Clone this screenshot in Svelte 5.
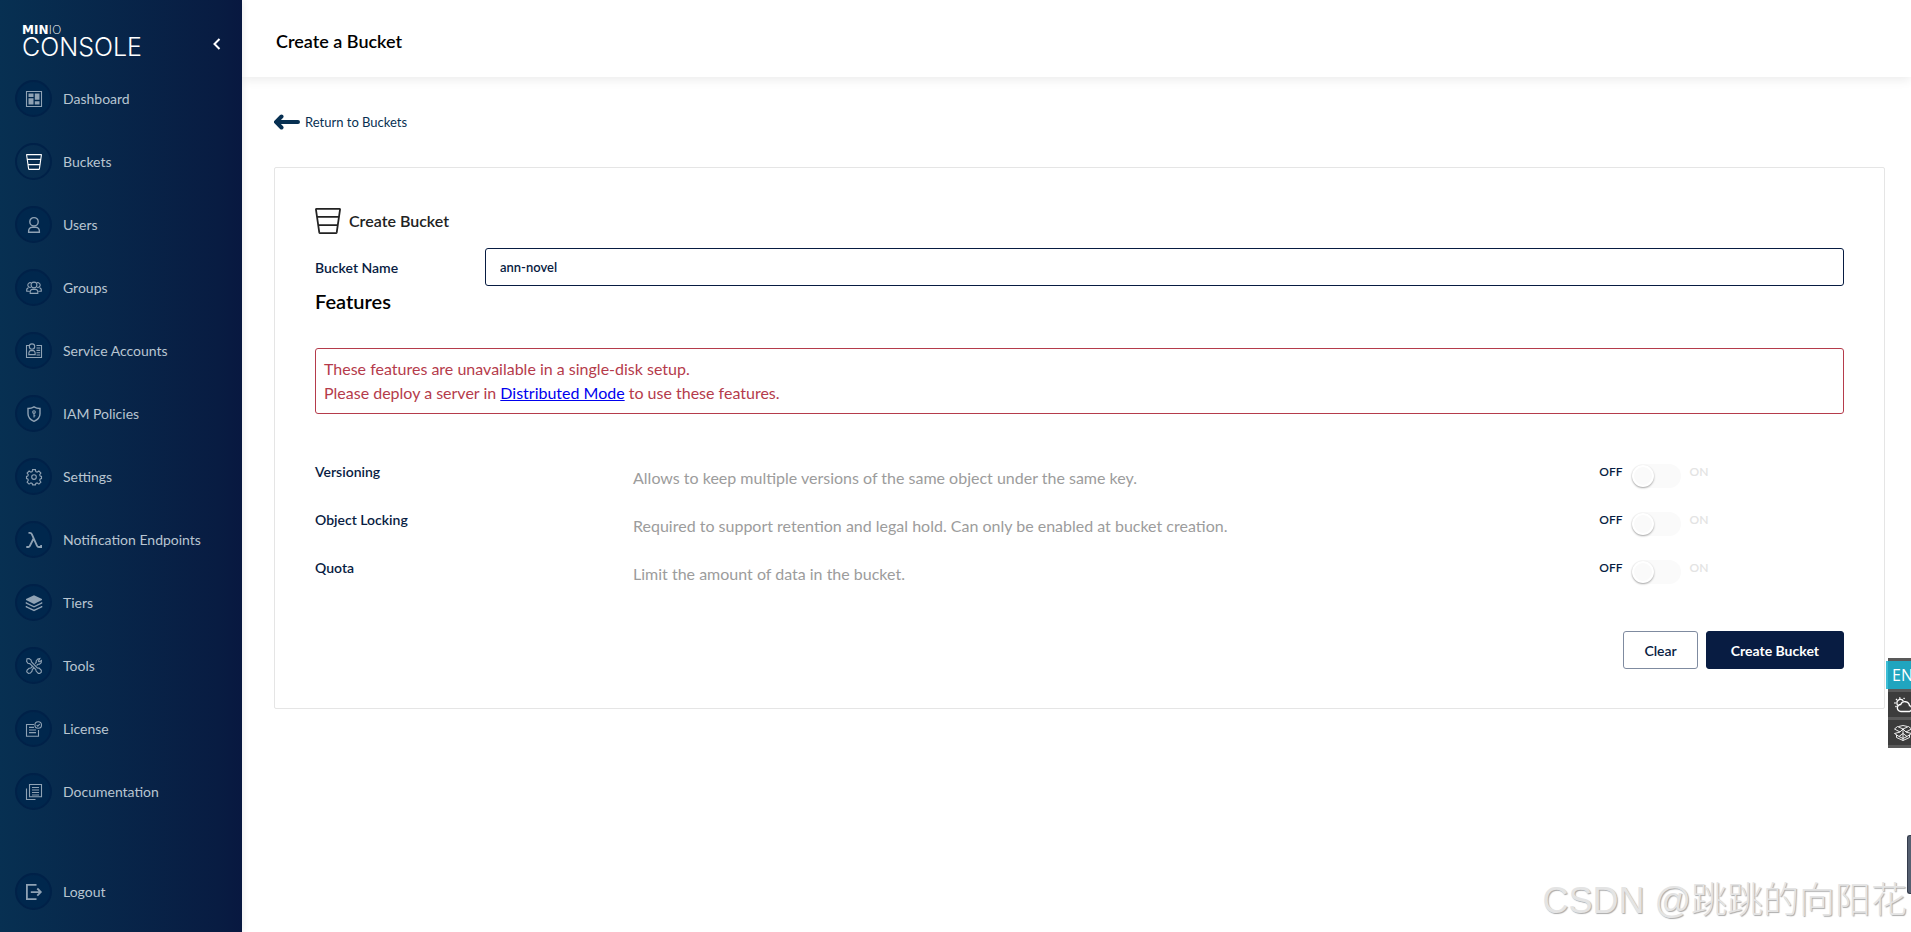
<script lang="ts">
    interface Feature {
        id: string;
        label: string;
        description: string;
    }

    const menu = [
        { name: "Dashboard", icon: "dashboard" },
        { name: "Buckets", icon: "buckets" },
        { name: "Users", icon: "users" },
        { name: "Groups", icon: "groups" },
        { name: "Service Accounts", icon: "account" },
        { name: "IAM Policies", icon: "policy" },
        { name: "Settings", icon: "settings" },
        { name: "Notification Endpoints", icon: "lambda" },
        { name: "Tiers", icon: "tiers" },
        { name: "Tools", icon: "tools" },
        { name: "License", icon: "license" },
        { name: "Documentation", icon: "documentation" },
    ];

    const features: Feature[] = [
        {
            id: "versioning",
            label: "Versioning",
            description:
                "Allows to keep multiple versions of the same object under the same key.",
        },
        {
            id: "locking",
            label: "Object Locking",
            description:
                "Required to support retention and legal hold. Can only be enabled at bucket creation.",
        },
        {
            id: "quota",
            label: "Quota",
            description: "Limit the amount of data in the bucket.",
        },
    ];

    let active = $state("Buckets");
    let bucket_name = $state("ann-novel");
</script>

{#snippet icon(name: string)}
    <svg class="icon" viewBox="0 0 16 16" aria-hidden="true">
        {#if name === "dashboard"}
            <path class="line" d="M.5.5h15v15H.5z" />
            <path
                class="fill"
                d="M2.5 2.5h5v3.4h-5zM2.5 7.2h5v6.3h-5zM8.8 2.5h4.7v6.3H8.8zM8.8 10.2h4.7v3.3H8.8z"
            />
        {:else if name === "buckets"}
            <path
                class="line"
                d="M.9.6h14.2q.4 0 .3.4l-2 13.9q-.1.5-.6.5H3.2q-.5 0-.6-.5L.6 1Q.5.6.9.6zM1.2 5.4h13.6M2 10.6h12"
            />
        {:else if name === "users"}
            <circle class="line bold" cx="8" cy="4.8" r="4.2" />
            <path
                class="line bold"
                d="M2.6 15.3q-.3-5 3.6-5h3.6q3.9 0 3.6 5z"
            />
        {:else if name === "groups"}
            <circle class="line" cx="8" cy="5" r="2.9" />
            <path
                class="line"
                d="M4.2 13.4q-.4-4 2.4-4h2.8q2.8 0 2.4 4zM4.8 7.4A2.4 2.4 0 1 1 5 2.8M11.2 7.4A2.4 2.4 0 1 0 11 2.8M3.6 11.3H.7Q.3 8.2 2.4 7.9M12.4 11.3h2.9q.4-3.1-1.7-3.4"
            />
        {:else if name === "account"}
            <path
                class="line"
                d="M3 2.5H.5v12h15v-12h-5M10.5 5h3.6M10.5 7.4h3.6M10.5 9.8h3.6M10.5 12h3.6"
            />
            <circle class="line" cx="6" cy="3.6" r="2.7" />
            <path class="line" d="M2.8 11.6q0-4 2-4h2.4q2 0 2 4z" />
        {:else if name === "policy"}
            <path
                class="line bold"
                d="M8 .8q2.6 1.7 6 1.7v5.3q0 5-6 7.5-6-2.5-6-7.5V2.5q3.4 0 6-1.7z"
            />
            <circle class="line" cx="8" cy="6" r="1.3" />
            <path class="line" d="M8 7v4.6M8 9.7h1.4" />
        {:else if name === "settings"}
            <path
                class="line"
                d="M6.6.6h2.8l.4 2 1.3.6 1.8-1.2 2 2-1.2 1.8.5 1.3 1.3.3v2.2l-1.3.4-.5 1.3 1.2 1.8-2 2-1.8-1.2-1.3.6-.4 1.4H6.600l-.4-1.400-1.300-.6-1.800 1.200-2-2 1.200-1.800-.5-1.300-1.300-.4V7.400l1.300-.3.5-1.300L1.100 4l2-2 1.800 1.200 1.300-.6z"
            />
            <circle class="line" cx="8" cy="8.1" r="2.3" />
        {:else if name === "lambda"}
            <path
                class="line heavy"
                d="M2.5.9h1.4q1.4 0 2 1.4l5 11.3q.6 1.4 2 1.4h2.2v-2M7.6 6.5 3.8 14q-.5 1-1.5 1H.3"
            />
        {:else if name === "tiers"}
            <path
                class="fill"
                d="m8 .2 8 3.8v1.1L8 9 0 5.1V4z"
            />
            <path
                class="line bold"
                d="M.4 7.2v.9L8 11.8l7.600-3.700v-.9M.4 10.900v.9L8 15.400l7.600-3.600v-.9"
            />
        {:else if name === "tools"}
            <path
                class="line"
                d="M1 .8 3.1.5l2 1.6.4 1.9 5.8 5.9 1.8.2 2.2 2.2v1.9l-1.5 1.2h-1.5L10.1 13l-.3-1.5-6-5.9-1.9-.4L.6 3.4zM9 5.6l1.2-1.2V3l1.6-2 2-.4-1.4 2.5.7.8 2.3-1.4-.2 2.2-1.7 1.5-1.5.1-1.400 1.200M6.800 8.100 4.900 10l-1.800.3-2 1.800-.4 1.800 1.800 1.500 1.900-.3L6 13.200l.3-1.600 1.900-1.900"
            />
        {:else if name === "license"}
            <path
                class="line"
                d="M8 3.5H.5v11.7h12V9M3 6.4h5M3 9h7M3 11.6h7"
            />
            <circle class="line" cx="12.2" cy="4" r="3.3" />
            <path class="line" d="m10.7 4 1.1 1.2 2-2.2" />
        {:else if name === "documentation"}
            <path
                class="line"
                d="M3.5.5h12v12.3h-12zM.5 4.5v11h9M6 3.5h7M6 6h7M6 8.5h7M6 11h7"
            />
        {:else if name === "logout"}
            <path
                class="line heavy"
                d="M10.5.9H.9v14.3h9.6M4.8 8.1h9.6M11.3 4.5l3.5 3.6-3.5 3.6"
            />
        {/if}
    </svg>
{/snippet}

{#snippet menu_item(name: string, glyph: string)}
    <button
        class="menu-item"
        class:active={active === name}
        onclick={() => (active = name)}
    >
        <span class="menu-icon">{@render icon(glyph)}</span>
        {name}
    </button>
{/snippet}

<div class="console">
    <aside class="sidebar">
        <div class="brand">
            <div class="logo">
                <span class="logo-small"><b>MIN</b>IO</span>
                <span class="logo-large">CONSOLE</span>
            </div>
            <button class="collapse" aria-label="Collapse menu">
                <svg viewBox="0 0 8 12" aria-hidden="true">
                    <path d="M6.5 1 1.5 6l5 5" />
                </svg>
            </button>
        </div>
        <nav class="menu">
            {#each menu as item (item.name)}
                {@render menu_item(item.name, item.icon)}
            {/each}
        </nav>
        <div class="menu-footer">
            {@render menu_item("Logout", "logout")}
        </div>
    </aside>

    <main class="content">
        <header class="page-header">
            <h1>Create a Bucket</h1>
        </header>

        <div class="page">
            <a class="back" href="#buckets">
                <svg viewBox="0 0 26 16" aria-hidden="true">
                    <path d="M24 8H3M7.5 2.5 2 8l5.5 5.5" />
                </svg>
                Return to Buckets
            </a>

            <form class="card" onsubmit={(e) => e.preventDefault()}>
                <h2 class="card-title">
                    {@render icon("buckets")}
                    Create Bucket
                </h2>

                <div class="field">
                    <label for="bucket-name">Bucket Name</label>
                    <input id="bucket-name" type="text" bind:value={bucket_name} />
                </div>

                <h3>Features</h3>

                <p class="notice">
                    These features are unavailable in a single-disk setup.<br />
                    Please deploy a server in
                    <a href="#distributed">Distributed Mode</a> to use these features.
                </p>

                <div class="features">
                    {#each features as feature (feature.id)}
                        <div class="feature">
                            <label for={feature.id}>{feature.label}</label>
                            <p>{feature.description}</p>
                            <div class="toggle">
                                <span>OFF</span>
                                <input
                                    id={feature.id}
                                    type="checkbox"
                                    role="switch"
                                    disabled
                                />
                                <span class="on">ON</span>
                            </div>
                        </div>
                    {/each}
                </div>

                <div class="actions">
                    <button type="button" onclick={() => (bucket_name = "")}>
                        Clear
                    </button>
                    <button type="submit" class="primary">Create Bucket</button>
                </div>
            </form>
        </div>
    </main>

    <div class="dock">
        <button class="lang">EN</button>
        <button aria-label="Weather">
            <svg viewBox="0 0 20 16" aria-hidden="true">
                <path
                    d="M7 14.5a3.5 3.5 0 0 1-.3-7 4.6 4.6 0 0 1 8.8 1.2 3 3 0 0 1 0 5.8zM4 8.5A3.5 3.5 0 1 1 9.3 4M5.8.3v1.4M2 2l1 1M.3 6h1.4M10.5.8l-.8 1.2M1.5 10l1-1"
                />
            </svg>
        </button>
        <button aria-label="Packages">
            <svg class="thin" viewBox="0 0 20 16" aria-hidden="true">
                <path
                    d="M9 4 3.500 1.500.5 4 6 7zM9 4l5.500-2.500 3 2.500L12 7zM4.500 1.500 9 .5l4.500 1M6 7 .5 8.500 5 11.500 9 8.500l4 3 4.500-3L12 7M9 4v11.500M2.500 10v2.500L9 15.500l6.500-3V10M5 11.500l4 2 4-2"
                />
            </svg>
        </button>
    </div>
    <div class="handle"></div>
    <div class="watermark">CSDN @跳跳的向阳花</div>
</div>

<style>
    :global(body) {
        color: #000;
        background: #fff;
        font-family: Lato, "Noto Sans CJK SC", sans-serif;
    }

    h1,
    h2,
    h3,
    p {
        margin: 0;
    }

    button,
    input {
        font-family: inherit;
    }

    button {
        cursor: pointer;
    }

    .console {
        display: flex;
        min-height: 100vh;
        position: relative;
        overflow: hidden;
    }

    .icon {
        display: block;
        width: 16px;
        height: 16px;
        overflow: visible;
    }

    .line {
        fill: none;
        stroke: currentColor;
        stroke-width: 1.1;
    }

    .line.bold {
        stroke-width: 1.4;
    }

    .line.heavy {
        stroke-width: 1.8;
    }

    .fill {
        fill: currentColor;
    }

    .sidebar {
        display: flex;
        flex-direction: column;
        flex: none;
        box-sizing: border-box;
        width: 242px;
        padding: 24px 0 22px;
        background: linear-gradient(90deg, #073052 0%, #081c42 90%, #081840 100%);
        box-shadow: 0 0 8px rgba(0, 0, 0, 0.1);
        z-index: 2;
    }

    .brand {
        display: flex;
        justify-content: space-between;
        height: 43px;
        padding: 0 19px 0 22px;
        color: #fff;
    }

    .logo {
        display: flex;
        flex-direction: column;
    }

    .logo-small {
        font-family: "DejaVu Sans", sans-serif;
        font-size: 12px;
        line-height: 12px;
        font-weight: 200;
    }

    .logo-small b {
        font-weight: 700;
    }

    .logo-large {
        font-family: Inter, sans-serif;
        font-size: 25px;
        line-height: 22px;
        font-weight: 300;
    }

    .collapse {
        width: 12px;
        height: 42px;
        padding: 0;
        border: 0;
        background: none;
    }

    .collapse svg {
        width: 8px;
        height: 12px;
        fill: none;
        stroke: #fff;
        stroke-width: 2;
    }

    .menu {
        display: flex;
        flex-direction: column;
    }

    .menu-footer {
        margin-top: auto;
    }

    .menu-item {
        display: flex;
        align-items: center;
        gap: 11px;
        width: 100%;
        height: 63px;
        padding: 0 15px;
        border: 0;
        background: none;
        color: #b8c5d1;
        font-size: 14px;
        text-align: left;
    }

    .menu-footer .menu-item {
        height: 37px;
    }

    .menu-icon {
        display: flex;
        align-items: center;
        justify-content: center;
        box-sizing: border-box;
        width: 37px;
        height: 37px;
        border: 2px solid #002148;
        border-radius: 50%;
        background: #00274d;
        color: #8fa2b4;
    }

    .active .menu-icon {
        background: none;
        color: #fff;
    }

    .content {
        flex: 1;
        min-width: 0;
    }

    .page-header {
        display: flex;
        align-items: center;
        box-sizing: border-box;
        height: 77px;
        padding: 4px 34px 0;
        box-shadow: 0 3px 10px rgba(0, 0, 0, 0.08);
    }

    h1 {
        font-size: 18px;
        font-weight: 600;
    }

    .page {
        padding: 32px 26px 32px 32px;
    }

    .back {
        display: inline-flex;
        align-items: center;
        gap: 5px;
        height: 26px;
        color: #073052;
        font-size: 13px;
        text-decoration: none;
    }

    .back svg {
        width: 26px;
        height: 16px;
        fill: none;
        stroke: currentColor;
        stroke-width: 4;
        stroke-linecap: round;
    }

    .card {
        margin-top: 32px;
        padding: 39px 40px;
        border: 1px solid #e5e5e5;
        border-radius: 2px;
    }

    .card-title {
        display: flex;
        align-items: center;
        gap: 8px;
        height: 27px;
        color: #222;
        font-size: 16px;
        font-weight: 600;
    }

    .card-title .icon {
        width: 26px;
        height: 26px;
    }

    .field {
        display: flex;
        align-items: center;
        margin-top: 14px;
    }

    .field label {
        width: 170px;
    }

    label {
        color: #081c42;
        font-size: 14px;
        font-weight: 600;
    }

    .field input {
        flex: 1;
        box-sizing: border-box;
        height: 38px;
        padding: 0 14px;
        border: 1px solid #081c42;
        border-radius: 3px;
        color: #081c42;
        font-size: 13px;
        font-weight: 600;
        outline: none;
    }

    h3 {
        margin-top: 3px;
        font-size: 20px;
        line-height: 24px;
        font-weight: 600;
    }

    .notice {
        margin-top: 35px;
        padding: 8px;
        border: 1px solid #b53b4b;
        border-radius: 3px;
        color: #b53b4b;
        font-size: 16px;
        line-height: 24px;
    }

    .notice a {
        color: #00e;
    }

    .features {
        margin-top: 48px;
    }

    .feature {
        display: grid;
        grid-template-columns: 26fr 79fr 20fr;
        height: 48px;
    }

    .feature label {
        line-height: 20px;
    }

    .feature p {
        padding-top: 4px;
        color: #9c9c9c;
        font-size: 16px;
        line-height: 24px;
    }

    .toggle {
        display: flex;
        align-items: flex-start;
        color: #081c42;
        font-size: 12px;
        line-height: 20px;
        font-weight: 600;
    }

    .toggle input {
        appearance: none;
        width: 50px;
        height: 24px;
        margin: 2px 9px 0 8px;
        border-radius: 12px;
        background: #fafafa;
    }

    .toggle input::before {
        content: "";
        display: block;
        box-sizing: border-box;
        width: 22px;
        height: 22px;
        margin: 1px;
        border: 2px solid #fff;
        border-radius: 50%;
        background: #fafafa;
        box-shadow: 0 1px 2px rgba(0, 0, 0, 0.35);
    }

    .toggle .on {
        color: #e3e3e3;
    }

    .actions {
        display: flex;
        justify-content: flex-end;
        gap: 8px;
        margin-top: 25px;
    }

    .actions button {
        height: 38px;
        padding: 0 20px;
        border: 1px solid #7f8ba0;
        border-radius: 3px;
        background: #fff;
        color: #081c42;
        font-size: 14px;
        font-weight: 600;
    }

    .actions .primary {
        padding: 0 24px;
        border-color: #081c42;
        background: #081c42;
        color: #fff;
        font-weight: 700;
    }

    /* floating widgets pinned to the right edge of the window */
    .dock {
        position: absolute;
        top: 658px;
        right: 0;
        display: flex;
        flex-direction: column;
        align-items: flex-end;
        gap: 3px;
        width: 23px;
        padding: 3px 0;
        background: #595959;
    }

    .dock button {
        display: flex;
        align-items: center;
        width: 23px;
        height: 25px;
        padding: 0 0 0 6px;
        border: 0;
        background: #3c3c3c;
        overflow: hidden;
    }

    .dock .lang {
        width: 25px;
        height: 28px;
        border-left: 2px solid #3dbdd5;
        padding-left: 4px;
        background: #20a5bf;
        color: #fff;
        font-family: "Open Sans", sans-serif;
        font-size: 16px;
    }

    .dock svg {
        flex: none;
        width: 20px;
        height: 16px;
        fill: none;
        stroke: #fff;
        stroke-width: 1.3;
    }

    .dock .thin {
        stroke-width: 0.9;
    }

    .handle {
        position: absolute;
        top: 835px;
        right: 0;
        box-sizing: border-box;
        width: 4px;
        height: 59px;
        border: 1px solid #343c4c;
        border-right: 0;
        border-radius: 3px 0 0 3px;
        background: #555f70;
    }

    .watermark {
        position: absolute;
        right: 4px;
        bottom: 5px;
        color: #e4e4e4;
        font-family: "Liberation Sans", "Noto Sans CJK SC", sans-serif;
        font-size: 36px;
        font-weight: 300;
        line-height: 52px;
        text-shadow: 1px 1px 1px #aaa;
        white-space: nowrap;
    }
</style>
